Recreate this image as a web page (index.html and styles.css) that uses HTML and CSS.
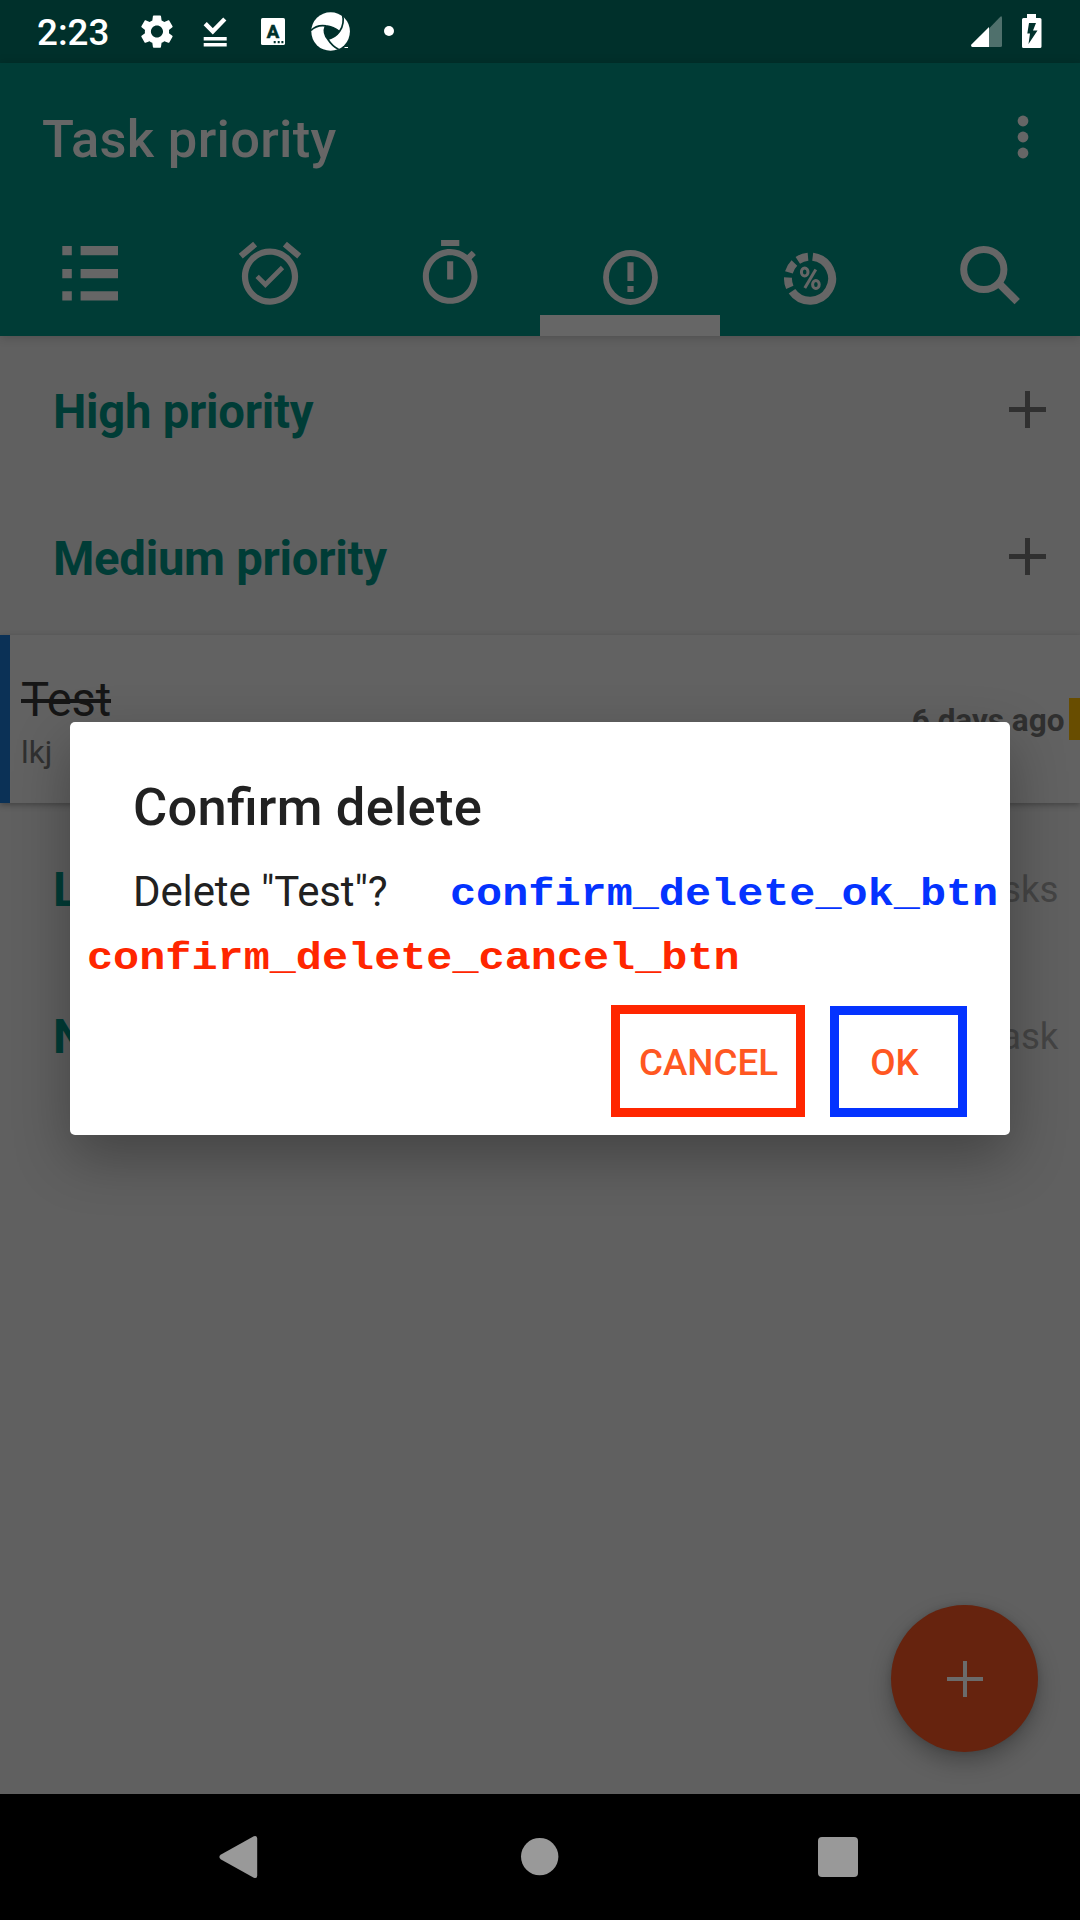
FILE: index.html
```html
<!DOCTYPE html>
<html lang="en">
<head>
<meta charset="utf-8">
<title>Task priority</title>
<link rel="stylesheet" href="styles.css">
</head>
<body>
<div class="screen">
  <header class="status">
    <span class="clock">2:23</span>
    <svg class="status-left" width="270" height="63" viewBox="130 0 270 63">
      <path fill="#fff" transform="translate(136.8 11.4) scale(1.68)" d="M19.14 12.94c.04-.3.06-.61.06-.94 0-.32-.02-.64-.07-.94l2.03-1.58c.18-.14.23-.41.12-.61l-1.92-3.32c-.12-.22-.37-.29-.59-.22l-2.39.96c-.5-.38-1.03-.7-1.62-.94l-.36-2.54c-.04-.24-.24-.41-.48-.41h-3.84c-.24 0-.43.17-.47.41l-.36 2.54c-.59.24-1.13.57-1.62.94l-2.39-.96c-.22-.08-.47 0-.59.22L2.74 8.87c-.12.21-.08.47.12.61l2.03 1.58c-.05.3-.09.63-.09.94s.02.64.07.94l-2.03 1.58c-.18.14-.23.41-.12.61l1.92 3.32c.12.22.37.29.59.22l2.39-.96c.5.38 1.03.7 1.62.94l.36 2.54c.05.24.24.41.48.41h3.84c.24 0 .44-.17.47-.41l.36-2.54c.59-.24 1.13-.56 1.62-.94l2.39.96c.22.08.47 0 .59-.22l1.92-3.32c.12-.22.07-.47-.12-.61l-2.01-1.58zM12 15.6c-1.98 0-3.6-1.62-3.6-3.6s1.62-3.6 3.6-3.6 3.6 1.62 3.6 3.6-1.62 3.6-3.6 3.6z"/>
      <path fill="none" stroke="#fff" stroke-width="4.4" d="M205.2 23.6l7.6 7.8L224.8 19"/>
      <path fill="#fff" d="M203.7 37h23v3.6h-23zM203.7 43h23v3.6h-23z"/>
      <rect x="261" y="18" width="24" height="27" rx="1.6" fill="#fff"/>
      <text class="glyph-a" x="273" y="37.5" text-anchor="middle">A</text>
      <path fill="#00302b" d="M273.7 41h2v2.2h-2zM277.7 41h2v2.2h-2zM281.4 41h2v2.2h-2z"/>
      <circle cx="330.6" cy="31.5" r="19.3" fill="#fff"/>
      <path fill="#00302b" d="M325.3 26.3c5.500-.6 10 1.500 14.200 5.200-2.300 4-6.300 6.700-11.500 7.600-3.500-4-4.500-8.300-2.700-12.800z"/>
      <path fill="none" stroke="#00302b" stroke-width="1.700" d="M311 30.500c4-4.200 9-5.500 15-4.600 5.500.6 9.800 2.600 13.500 5.700M342.300 13.500c1.800 7 .9 13-2.800 18.100-2.800 3.900-6.500 6.400-11.500 7.600M325.300 26.300c-1.800 4.500-.8 9 2.700 13.200 2.700 4.200 6 7.600 10.500 9.800"/>
      <path fill="#fff" d="M344.500 47h3.500v1h-3.500z"/>
      <circle cx="389" cy="31" r="5" fill="#fff"/>
    </svg>
    <svg class="status-right" width="80" height="63" viewBox="965 0 80 63">
      <path fill="#4f706c" d="M989 28.500L1000.300 16.700Q1002 15.500 1002 18V45.500Q1002 47 1000.500 47H989z"/>
      <path fill="#fff" d="M989 27v20h-16.700q-2.200-.8-.6-2.700z"/>
      <path fill="#fff" d="M1027 14h9v4h4q1.500 0 1.500 1.500v27q0 1.500-1.500 1.500h-16.500q-1.500 0-1.500-1.500v-27q0-1.500 1.500-1.500h3.500z"/>
      <path fill="#00302b" d="M1029 23h7l-3 7.500h4.500L1028.500 44l1.500-10.500h-2.700z"/>
    </svg>
  </header>

  <div class="appbar">
    <div class="toolbar">
      <h1 class="title">Task priority</h1>
      <svg width="12" height="44" viewBox="0 0 12 44" fill="#666"><circle cx="6" cy="6" r="5.400"/><circle cx="6" cy="22" r="5.400"/><circle cx="6" cy="38" r="5.400"/></svg>
    </div>
    <nav class="tabs">
      <div class="tab"><svg viewBox="0 210 180 126"><path d="M62.300 246h9.500v9.300h-9.500zM80.600 246H118v9.300H80.600zM62.300 269h9.500v9.200h-9.500zM80.600 269H118v9.200H80.600zM62.300 291.300h9.500v9.300h-9.500zM80.600 291.300H118v9.300H80.600z"/></svg></div>
      <div class="tab"><svg viewBox="180 210 180 126"><path transform="translate(232.500 235.900) scale(3.125)" d="M22 5.720l-4.600-3.860-1.290 1.530 4.600 3.860L22 5.720zM7.880 3.390L6.600 1.860 2 5.710l1.290 1.530 4.590-3.850zM12 4c-4.970 0-9 4.030-9 9s4.020 9 9 9c4.970 0 9-4.030 9-9s-4.030-9-9-9zm0 16c-3.870 0-7-3.130-7-7s3.130-7 7-7 7 3.130 7 7-3.130 7-7 7zM10.540 14.530L8.410 12.400l-1.060 1.060 3.180 3.180 6-6-1.060-1.060-4.930 4.950z"/></svg></div>
      <div class="tab"><svg viewBox="360 210 180 126"><path transform="translate(413.700 236.900) scale(3.040)" d="M15 1H9v2h6V1zm-4 13h2V8h-2v6zm8.030-6.610l1.420-1.420c-.43-.51-.9-.99-1.410-1.410l-1.420 1.420C16.070 4.740 14.120 4 12 4c-4.970 0-9 4.030-9 9s4.020 9 9 9 9-4.030 9-9c0-2.120-.74-4.070-1.970-5.610zM12 20c-3.870 0-7-3.130-7-7s3.130-7 7-7 7 3.130 7 7-3.130 7-7 7z"/></svg></div>
      <div class="tab tab-active"><svg viewBox="540 210 180 126"><circle class="line" cx="630.500" cy="277.500" r="24.500" stroke-width="5.800"/><path d="M627.400 262.200h6.200v18.700h-6.200zM627.400 286h6.200v6h-6.200z"/></svg></div>
      <div class="tab"><svg viewBox="720 210 180 126"><g class="line" transform="translate(810 278.600)" stroke-width="8"><path d="M-2-21.900A22 22 0 0 0-12.200-18.300M-15.600-15.600A22 22 0 0 0-21.100-6.200M-22-1.150A22 22 0 0 0-20.200 8.800M-18 12.600A22 22 0 1 0 2.700-21.800"/><path stroke-width="3" d="M5.800-9.200L-5.200 9.500"/><ellipse cx="-5.300" cy="-6.600" rx="3.300" ry="4" stroke-width="3"/><ellipse cx="5.900" cy="5.900" rx="3.300" ry="4" stroke-width="3"/></g></svg></div>
      <div class="tab"><svg viewBox="900 210 180 126"><circle class="line" cx="983.800" cy="269.500" r="20.100" stroke-width="7"/><path class="line" stroke-width="7.600" d="M999 283.500L1017.200 301.600"/></svg></div>
    </nav>
  </div>

  <main class="list">
    <div class="row"><h2>High priority</h2><span class="plus"></span></div>
    <div class="row"><h2>Medium priority</h2><span class="plus"></span></div>
    <article class="card">
      <div class="card-text">
        <div class="card-name">Test</div>
        <div class="card-note">lkj</div>
      </div>
      <div class="card-age">6 days ago</div>
      <div class="card-flag"></div>
    </article>
    <div class="row"><h2>Low priority</h2><span class="count">0 tasks</span></div>
    <div class="row"><h2>No priority</h2><span class="count">1 task</span></div>
  </main>

  <div class="fab"><span class="plus plus-fab"></span></div>

  <footer class="navbar">
    <svg width="40" height="44" viewBox="0 0 40 44"><path d="M1.600 19.800L34.800 1.300Q38.200 0 38.200 3.500V40.500Q38.200 44 34.800 42.700L1.600 24.200Q-.8 22 1.600 19.800z"/></svg>
    <svg width="40" height="40" viewBox="0 0 40 40"><circle cx="20.700" cy="19.600" r="18.700"/></svg>
    <svg width="40" height="40" viewBox="0 0 40 40"><rect width="40" height="40" rx="4"/></svg>
  </footer>

  <section class="dialog">
    <h3>Confirm delete</h3>
    <div class="message">
      <p>Delete "Test"?</p>
      <span class="note note-ok">confirm_delete_ok_btn</span>
    </div>
    <span class="note note-cancel">confirm_delete_cancel_btn</span>
    <div class="actions">
      <div class="btn btn-cancel">CANCEL</div>
      <div class="btn btn-ok">OK</div>
    </div>
  </section>
</div>
</body>
</html>
```
FILE: styles.css
```css
* { box-sizing: border-box; }
body { margin: 0; font-family: Roboto, "Liberation Sans", sans-serif; }
h1, h2, h3, p { margin: 0; font-weight: 400; }
svg { display: block; }

.screen {
  position: relative;
  display: flex;
  flex-direction: column;
  width: 1080px;
  height: 1920px;
  overflow: hidden;
  background: #606060;
}

.status {
  display: flex;
  align-items: center;
  height: 63px;
  background: #00302b;
  color: #fff;
}
.clock {
  width: 93px;
  margin-left: 37px;
  padding-top: 3px;
  font-size: 36.75px;
  font-weight: 500;
  line-height: 44px;
}
.status-right { margin-left: auto; margin-right: 35px; }
.glyph-a { font: 700 18.5px Roboto, sans-serif; fill: #00302b; stroke: #00302b; stroke-width: .6px; }

.appbar {
  height: 273px;
  background: #003c36;
  box-shadow: 0 1px 10px rgba(0, 0, 0, .2);
}
.toolbar {
  display: flex;
  align-items: center;
  justify-content: space-between;
  height: 147px;
  padding: 0 51.5px 0 42px;
}
.title {
  padding-top: 5px;
  font-size: 52.5px;
  font-weight: 500;
  line-height: 62px;
  letter-spacing: .3px;
  color: #666;
}
.tabs { display: grid; grid-template-columns: repeat(6, 1fr); height: 126px; }
.tab svg { width: 180px; height: 126px; fill: #666; }
.tab .line { fill: none; stroke: #666; }
.tab-active { box-shadow: inset 0 -21px #666; }

.list { flex: 1; }
.row {
  display: flex;
  align-items: center;
  justify-content: space-between;
  height: 147px;
  padding: 0 21.5px 0 53px;
}
.row h2 {
  padding-top: 5px;
  font-size: 47.25px;
  font-weight: 700;
  line-height: 56px;
  letter-spacing: -.27px;
  color: #003c36;
}
.plus {
  width: 37px;
  height: 37px;
  margin-right: 12.5px;
  background:
    linear-gradient(#303030, #303030) center / 37px 5px no-repeat,
    linear-gradient(#303030, #303030) center / 5px 37px no-repeat;
}
.count { padding-top: 4px; font-size: 36.75px; line-height: 44px; color: #444; }

.card {
  display: flex;
  align-items: center;
  height: 168px;
  margin: 5px 0 11px;
  border-left: 10px solid #0b3156;
  background: #626262;
  box-shadow: 0 2px 6px rgba(0, 0, 0, .3);
}
.card-text { flex: 1; align-self: flex-start; padding: 38px 0 0 11px; }
.card-name {
  font-size: 47.25px;
  line-height: 55px;
  letter-spacing: -.2px;
  color: #161616;
  text-decoration: line-through;
}
.card-note { margin-top: 6px; font-size: 31.5px; line-height: 37px; color: #303030; }
.card-age {
  padding-top: 4px;
  margin-right: 4.5px;
  font-size: 31.5px;
  font-weight: 700;
  line-height: 38px;
  color: #303030;
}
.card-flag { width: 11px; height: 42px; background: #684d00; }

.fab {
  position: absolute;
  left: 891px;
  top: 1605px;
  display: flex;
  align-items: center;
  justify-content: center;
  width: 147px;
  height: 147px;
  border-radius: 50%;
  background: #66230e;
  box-shadow: 0 10px 22px rgba(0, 0, 0, .27), 0 0 6px rgba(0, 0, 0, .12);
}
.plus-fab {
  width: 36px;
  height: 36px;
  margin: 0;
  background:
    linear-gradient(#6b6b6b, #6b6b6b) center / 36px 4px no-repeat,
    linear-gradient(#6b6b6b, #6b6b6b) center / 4px 36px no-repeat;
}

.navbar {
  display: flex;
  align-items: center;
  justify-content: space-between;
  height: 126px;
  padding: 0 222px 0 219px;
  background: #000;
}
.navbar svg { fill: #999; }

.dialog {
  position: absolute;
  left: 70px;
  top: 722px;
  width: 940px;
  height: 413px;
  padding-top: 54px;
  border-radius: 5px;
  background: #fff;
  color: #212121;
  box-shadow: 0 22px 56px rgba(0, 0, 0, .3);
}
.dialog h3 {
  padding-left: 63px;
  font-size: 52.5px;
  font-weight: 500;
  font-feature-settings: "liga" 1;
  line-height: 62px;
  letter-spacing: .22px;
}
.message { display: flex; height: 50px; margin-top: 28px; padding-left: 63px; }
.message p { width: 317px; padding-top: 1px; font-size: 42px; line-height: 50px; letter-spacing: -.12px; }
.note {
  display: block;
  height: 50px;
  font: 700 43.5px/50px "Liberation Mono", monospace;
  white-space: nowrap;
  transform: scaleY(.91);
  transform-origin: 0 37px;
}
.note-ok { margin-top: 3px; color: #0433ff; }
.note-cancel { margin: 17px 0 0 17px; color: #ff2600; }
.actions { display: flex; gap: 25px; margin: 22px 0 0 541px; }
.btn {
  height: 112px;
  border: 9px solid;
  font-size: 36.75px;
  font-weight: 500;
  line-height: 97px;
  text-align: center;
}
.btn-cancel { width: 194px; padding-left: 1px; border-color: #ff2600; color: #ff5722; }
.btn-ok { width: 137px; height: 111px; margin-top: 1px; padding-right: 8px; border-color: #0433ff; color: #ff5722; line-height: 95px; }
```
